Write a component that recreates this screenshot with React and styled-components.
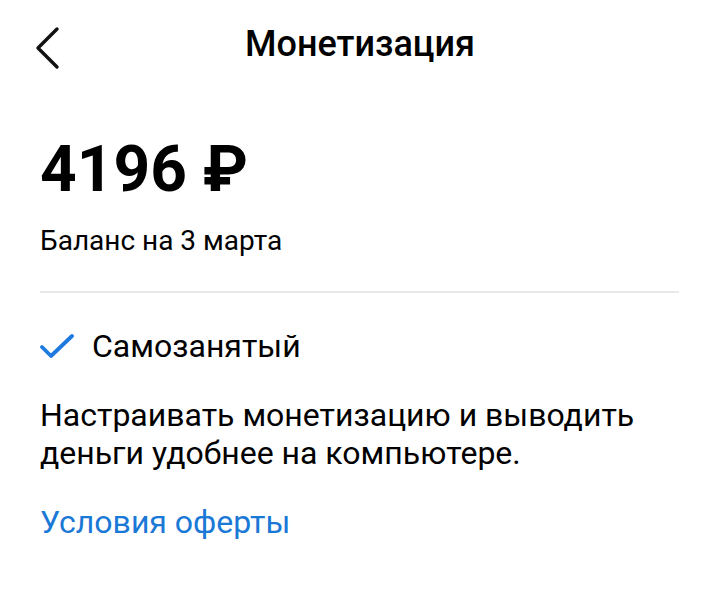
import styled, { createGlobalStyle } from 'styled-components'

const Global = createGlobalStyle`
  html, body {
    margin: 0;
    padding: 0;
    background: #ffffff;
  }
  body {
    font-family: Roboto, "Noto Sans", "Liberation Sans", sans-serif;
    color: #000000;
  }
`

const Page = styled.div`
  width: 719px;
  height: 592px;
  overflow: hidden;
  box-sizing: border-box;
  padding: 0 40px;
`

const Header = styled.header`
  position: relative;
  height: 88px;
  display: flex;
  align-items: center;
  justify-content: center;
`

const BackButton = styled.button`
  position: absolute;
  left: -5px;
  top: 26px;
  width: 26px;
  height: 44px;
  padding: 0;
  border: 0;
  background: none;
  display: flex;
  cursor: pointer;
`

const Title = styled.h1`
  margin: 0 0 0 1px;
  font-size: 36px;
  font-weight: 500;
`

const Amount = styled.div`
  margin-top: 44px;
  font-size: 64px;
  font-weight: 700;
  line-height: 76px;
`

const Caption = styled.div`
  margin-top: 17px;
  font-size: 28px;
  line-height: 32px;
`

const Divider = styled.hr`
  margin: 34px 0 0;
  border: 0;
  height: 2px;
  background: #e9e9e9;
`

const StatusRow = styled.div`
  margin-top: 35px;
  display: flex;
  align-items: center;
  gap: 18px;
  font-size: 32px;
  line-height: 36px;
`

const Text = styled.p`
  margin: 32px 0 0;
  font-size: 32px;
  line-height: 38px;
`

const Link = styled.a`
  display: block;
  margin-top: 32px;
  font-size: 32px;
  line-height: 36px;
  color: #1a78d6;
  text-decoration: none;
`

export default function App() {
  return (
    <>
      <Global />
      <Page>
        <Header>
          <BackButton aria-label="Назад">
            <svg width="26" height="44" viewBox="0 0 26 44">
              <path d="M22 3 L3 22 L22 41" fill="none" stroke="#111" strokeWidth="3.4" strokeLinecap="round" strokeLinejoin="round" />
            </svg>
          </BackButton>
          <Title>Монетизация</Title>
        </Header>
        <Amount>4196 ₽</Amount>
        <Caption>Баланс на 3 марта</Caption>
        <Divider />
        <StatusRow>
          <svg width="34" height="26" viewBox="0 0 34 26">
            <path d="M2 14 L11 23 L32 3" fill="none" stroke="#1f7ae0" strokeWidth="3.8" strokeLinecap="round" strokeLinejoin="round" />
          </svg>
          <span>Самозанятый</span>
        </StatusRow>
        <Text>
          Настраивать монетизацию и выводить
          <br />
          деньги удобнее на компьютере.
        </Text>
        <Link href="#">Условия оферты</Link>
      </Page>
    </>
  )
}
